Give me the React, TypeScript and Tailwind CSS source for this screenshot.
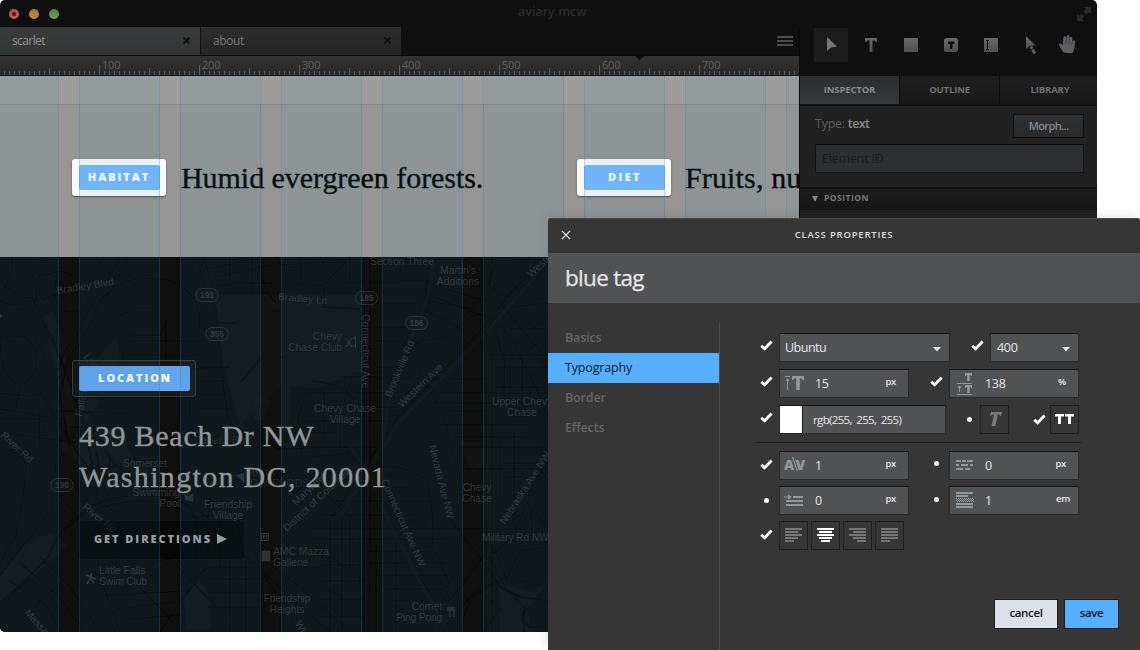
import type { ReactNode } from 'react';
import { FaHandPaper } from 'react-icons/fa';

const UI = "font-['Open_Sans',sans-serif]";

/* ---------- small icons ---------- */

function Check() {
  return (
    <svg width="13" height="11" viewBox="0 0 13 11" className="block">
      <path d="M1.3 5.8 4.6 8.8 11.6 1.6" fill="none" stroke="#fff" strokeWidth="2.8" />
    </svg>
  );
}

function Dot() {
  return <span className="mr-[4px] block size-[5px] rounded-full bg-white" />;
}

function Mark({ on, pad = 'pr-[6px]', className = '' }: { on: boolean; pad?: string; className?: string }) {
  return (
    <div className={`flex shrink-0 items-center justify-end ${pad} ${className}`}>
      {on ? <Check /> : <Dot />}
    </div>
  );
}

function Cross({ color, size = 8, width = 1.3 }: { color: string; size?: number; width?: number }) {
  return (
    <svg width={size} height={size} viewBox="0 0 8 8" className="-mt-px">
      <path d="M.7.7 7.3 7.3M7.3.7.7 7.3" stroke={color} strokeWidth={width} />
    </svg>
  );
}

/* ---------- tabs and ruler ---------- */

function FileTab({ name, active }: { name: string; active?: boolean }) {
  return (
    <div
      className={`flex h-[28px] w-[200px] items-center justify-between pr-[10px] text-[12px] ${
        active
          ? 'bg-gradient-to-b from-[#3a3c3c] to-[#323535] pl-[12px] tracking-[-0.600px] text-[#929496]'
          : 'bg-gradient-to-b from-[#2d2d2d] to-[#252525] pl-[12px] tracking-[-0.400px] text-[#777777]'
      }`}
    >
      <span className="-mt-px font-medium">{name}</span>
      <Cross color="#0d0d0d" size={7} width={2.2} />
    </div>
  );
}

function Ruler() {
  const ticks = Array.from({ length: 159 }, (_, i) => 4 + i * 5);
  return (
    <svg width="799" height="19" className="block shrink-0 bg-gradient-to-b from-[#333333] to-[#292929]">
      {ticks.map((x) => {
        const n = x + 1;
        const h = n % 100 === 0 ? 10 : n % 50 === 0 ? 7 : 4;
        return <rect key={x} x={x} y={19 - h} width="1" height={h} fill="#5b5b5b" />;
      })}
      {[100, 200, 300, 400, 500, 600, 700].map((n) => (
        <text key={n} x={n + 2} y="13" fontSize="11" letterSpacing="-.2" fill="#606060" className={UI}>
          {n}
        </text>
      ))}
      <path d="M635 0h9l-4.500 4.500z" fill="#0d0d0d" />
    </svg>
  );
}

/* ---------- canvas ---------- */

function Guides() {
  return (
    <div className="pointer-events-none absolute inset-0 flex overflow-hidden">
      <div className="w-[59px] shrink-0 border-r border-[rgba(50,115,180,0.24)] bg-[rgba(50,140,180,0.08)]" />
      {[0, 1, 2, 3, 4, 5, 6, 7].map((i) => (
        <div
          key={i}
          className="ml-[20px] w-[81px] shrink-0 border-x border-[rgba(50,115,180,0.24)] bg-[rgba(50,140,180,0.08)]"
        />
      ))}
    </div>
  );
}

function Tag({ children, className }: { children: ReactNode; className: string }) {
  return (
    <span
      className={`flex h-[25px] items-center justify-center rounded-[2px] pb-px font-['Open_Sans',sans-serif] font-extrabold text-white ${className}`}
    >
      {children}
    </span>
  );
}

function SelectedTag({ children, className }: { children: ReactNode; className: string }) {
  return (
    <div className="flex h-[37px] w-[94px] shrink-0 items-center justify-center rounded-[3px] bg-[#fbfaf9] shadow-[0_1px_2px_rgba(0,0,0,0.5)]">
      <Tag className={`w-[81px] bg-[#76b8ff] text-[11px] ${className}`}>{children}</Tag>
    </div>
  );
}

function Shield({ x, y, n }: { x: number; y: number; n: string }) {
  return (
    <g>
      <rect x={x - 11} y={y - 6.500} width="22" height="13" rx="6" fill="#0f1112" stroke="#2b2d2e" />
      <text x={x} y={y + 3} textAnchor="middle" fontSize="8.500" fontWeight="bold" fill="#333537">
        {n}
      </text>
    </g>
  );
}

function MapDrawing() {
  const roads = [
    'M0 24Q20 44 32 40L60 100 82 160 96 226',
    'M22 0Q38 20 36 44 60 38 86 24L104 0',
    'M12 0Q14 22 0 36M0 44Q20 52 34 42',
    'M60 14Q84 20 88 42 78 62 62 52 48 40 60 14',
    'M40 4 66 2M38 20 60 14M36 32 48 48',
    'M128 0Q110 40 96 54 80 90 68 100L60 140 70 190',
    'M120 0Q104 34 92 46 84 62 76 80 64 90 58 114',
    'M96 50Q120 12 170 24 200 34 200 70',
    'M110 66Q140 42 160 56M120 90Q116 72 134 78L160 78 166 66M128 84H204M130 98H204M166 60V112H130Q118 102 126 88',
    'M162 100H190V146M190 98V160M196 0Q204 28 216 52L222 120 228 160 244 194',
    'M204 0 214 36H266M214 30 238 26 272 26M216 20 272 8M210 12 252 2M230 0V24M252 0V36',
    'M200 110H222M200 124H224M200 138H228M200 152H230M180 120V162M190 112 230 110',
    'M0 82Q28 72 34 92 42 120 20 128 0 122 0 82M36 82 44 100M0 136Q26 140 38 138L60 120M38 138 40 190M20 128 16 150',
    'M0 162H40M0 176 68 184M0 152 62 162M44 140 80 200 110 240M60 154 128 156M70 170H130',
    'M0 190Q26 198 26 210 24 240 16 278 4 296 0 310',
    'M60 180Q54 210 52 250 40 270 20 292L0 318',
    'M96 194Q104 230 92 250 60 266 48 300 30 320 0 346',
    'M68 186 100 180Q112 220 150 222L190 212M100 224 146 218M80 212 160 206M110 196V230M130 200V234',
    'M56 234 96 282 140 330 182 375M96 240 132 270 180 312 226 360',
    'M70 270Q90 240 140 238 176 236 210 262L262 302 300 330 350 375',
    'M64 276Q82 248 140 244 174 244 206 268L256 308 290 340 330 375',
    'M20 306 60 340 84 375M10 324 48 350 60 375M40 300 72 332 100 375M70 300 100 320 120 375M0 350 30 322M18 366 60 326',
    'M150 266 184 310 178 334 210 310M184 246 196 260 240 256M196 262V300M208 254V310M220 250V310M236 254 244 300',
    'M182 302Q150 300 142 320 120 322 106 330M104 338 190 334M116 352 180 344M130 362 180 358',
    'M208 310H262M208 322H262M208 336H262M208 350H262M230 300V375M246 300V375M206 310 180 346 160 375',
    'M276 0Q290 24 306 30L324 28 350 0M282 8 340 4M324 28V50L360 52M320 0 330 22M300 0 302 28M350 24V0M400 0V26H340',
    'M276 46Q260 30 260 0M272 54H280M360 24H434M360 46H420',
    'M364 0V375M370 0V375M376 70H420M376 84H418M376 110H398M376 122H414M376 136H394M376 150H398',
    'M434 0Q432 30 424 50L408 90 390 130 384 180 368 216 350 230',
    'M430 0 425 45 403 90M434 0 428 52 406 94M458 6 474 0M426 44 476 52M424 52 462 72M420 60 446 82M440 30 492 46M434 40 492 62',
    'M412 90Q420 82 450 80 456 72 464 64 476 56 488 58',
    'M410 92 428 130 444 160 454 200 462 234',
    'M340 260Q358 230 400 164L486 76 548 0',
    'M332 260 398 160 480 74 540 0',
    'M492 0 490 30 506 40 548 2M488 28 496 4H512M500 14 530 0M494 30Q502 52 520 70L548 104',
    'M496 52 548 46M496 60Q520 94 540 140L548 160M510 72H548M504 66V170M490 98H548M492 64 506 110',
    'M548 58 516 88M548 78 530 92M548 132 530 150M510 104V160M522 100V160M496 110H548M496 130H548M540 102 548 114',
    'M486 98V375M492 98V375M438 136H548M424 122H486M434 146H530M444 154H486M440 168H530M454 180H530M460 190H548M462 212H548M465 226H486',
    'M306 136H408M306 150H400M300 164H396M290 176H340M300 190H376M312 124Q340 126 350 140L364 150M340 120H412M346 120Q340 134 360 144',
    'M306 136 298 160 302 200M324 136V180M340 150V190M276 192 350 190M310 200 350 196M350 200 366 210 400 210',
    'M366 210Q404 206 426 222 436 260 432 290 444 310 450 330L440 350 432 375',
    'M350 190 368 214 382 250 412 310 430 336 448 375',
    'M296 210 350 260 350 310M300 240 350 200M280 250 330 204M330 230H412M330 244H430M310 272H540M310 282H448M320 258H418',
    'M316 284 336 304 376 332 420 375M366 294H430M370 306H446M376 318H450M384 332H444M390 344H436M396 356H430',
    'M330 260V375M342 260V375M360 260V375M376 286V375M396 286V375M320 308H364M320 324H364M320 342H364M320 360H364',
    'M260 290 280 310H320M264 300 310 262M268 250 310 222M280 340V375M296 310V350M320 330 342 340M264 318 300 375',
    'M440 230 452 266 486 308 500 330 520 340 548 344',
    'M444 350 470 318 486 296 480 300M460 375 470 340 506 320 530 326M456 375Q462 328 500 326M490 300 506 332 524 350 524 375',
    'M548 290 520 294 505 324M494 290 508 326M530 240 512 280 494 296 486 280M500 188V240M500 220H530M500 206H548M514 170V240',
    'M480 334 500 352 484 375M530 350Q514 360 530 370H548M530 250 548 270M540 212 548 224M516 230Q530 242 532 262V280H548',
    'M280 100H284M262 100 240 126M218 66H236',
  ];
  return (
    <svg
      width="799"
      height="375"
      viewBox="0 0 799 375"
      className="absolute inset-0 font-['Liberation_Sans',Arial,sans-serif]"
    >
      <rect width="799" height="375" fill="#0f0f0f" />
      <g fill="#171717" fillOpacity=".5">
        <path d="M212 38h70v90l-42 40-12-40z" />
        <path d="M282 38h78v76l-40 16h-30v34l-8 6z" />
        <path d="M44 60l9-6 10 26 12 80-6 20zM80 120l36-40 4 24-26 50-14 20z" />
        <path d="M56 188l60-20 20 40-40 12z" />
        <path d="M254 146l6-10 12 8-8 18-10 2zM220 174l6-6 8 8-2 10-12 2z" />
        <path d="M0 320l20-30 30-14 18 12-24 22-44 40z" />
        <path d="M184 338l16-14 10 12v36h-24zM130 216l14-8 12 12-22 10z" />
        <path d="M460 185h24v22l-12 10zM500 375l-2-50 34 10 16-10-20 28 4 22z" />
      </g>
      <g fill="none" stroke="#131414" strokeWidth="3">
        {roads.map((d) => (
          <path key={d} d={d} />
        ))}
      </g>
      <g fill="none" stroke="#0a0a0b" strokeWidth="1.500">
        {roads.map((d) => (
          <path key={d} d={d} />
        ))}
      </g>
      <g fill="none" stroke="#111214" strokeWidth="3">
        <path d="M434 0Q432 30 424 50L408 90 390 130 384 180 368 216M340 260Q358 230 400 164L486 76 548 4M367 0V375M350 190 368 214 382 250 412 310 448 375" />
      </g>
      <g fill="#343536" fontSize="10.300" stroke="#0b0c0e" strokeWidth="1" paintOrder="stroke">
        <text transform="translate(57 37) rotate(-9)">Bradley Blvd</text>
        <text transform="translate(278 43) rotate(5)">Bradley Ln</text>
        <text x="370" y="8">Section Three</text>
        <text x="458" y="17" textAnchor="middle">Martin's</text>
        <text x="458" y="28" textAnchor="middle">Additions</text>
        <text transform="translate(531 21) rotate(-43)">Western Ave</text>
        <text x="342" y="83" textAnchor="end">Chevy</text>
        <text x="342" y="94" textAnchor="end">Chase Club</text>
        <text transform="translate(362 57) rotate(90)">Connecticut Ave</text>
        <text transform="translate(391 141) rotate(-67)">Brookville Rd</text>
        <text transform="translate(402 151) rotate(-44)">Western Ave</text>
        <text x="345" y="155" textAnchor="middle">Chevy Chase</text>
        <text x="345" y="166" textAnchor="middle">Village</text>
        <text x="522" y="148" textAnchor="middle">Upper Chevy</text>
        <text x="522" y="159" textAnchor="middle">Chase</text>
        <text transform="translate(83 100) rotate(52)">Little</text>
        <text transform="translate(82 160) rotate(-78)">Falls Pkwy</text>
        <text transform="translate(0 179) rotate(43)">River Rd</text>
        <text transform="translate(82 251) rotate(40)">River Rd</text>
        <text x="123" y="210">Somerset</text>
        <text x="180" y="239" textAnchor="end">Swimming</text>
        <text x="180" y="250" textAnchor="end">Pool</text>
        <text x="194" y="187" fill="#242526">Capella Bay</text>
        <text x="228" y="251" textAnchor="middle">Friendship</text>
        <text x="228" y="262" textAnchor="middle">Village</text>
        <text x="252" y="219" fill="#242526">Bank</text>
        <text x="250" y="230" fill="#242526">Gen FOODS</text>
        <text transform="translate(296 249) rotate(-43)">Maryland</text>
        <text transform="translate(287 275) rotate(-43)">District of Columbia</text>
        <text transform="translate(381 224) rotate(66)">Connecticut Ave NW</text>
        <text transform="translate(429 189) rotate(76)">Nevada Ave NW</text>
        <text x="477" y="234" textAnchor="middle">Chevy</text>
        <text x="477" y="245" textAnchor="middle">Chase</text>
        <text transform="translate(505 268) rotate(-57)">Nebraska Ave NW</text>
        <text x="482" y="284" letterSpacing="-.15">Military Rd NW</text>
        <text x="273" y="298">AMC Mazza</text>
        <text x="273" y="309">Gallerie</text>
        <text x="287" y="345" textAnchor="middle" letterSpacing="-.15">Friendship</text>
        <text x="287" y="356" textAnchor="middle">Heights</text>
        <text x="442" y="353" textAnchor="end">Comet</text>
        <text x="442" y="364" textAnchor="end" letterSpacing="-.2">Ping Pong</text>
        <text x="99" y="317">Little Falls</text>
        <text x="99" y="328" letterSpacing="-.15">Swim Club</text>
        <text transform="translate(24 356) rotate(48)">Massachusetts</text>
        <text transform="translate(295 366) rotate(62)">Wisconsin</text>
      </g>
      <Shield x={207} y={38} n="191" />
      <Shield x={217} y={77} n="355" />
      <Shield x={366.500} y={41} n="185" />
      <Shield x={416.500} y={66} n="186" />
      <Shield x={62} y={228} n="190" />
      <g fill="none" stroke="#303336">
        <path d="M346 81l6 9M352 81l-6 9M345 89h3M351 89h3M355.500 79v12M353 81h2" />
        <rect x="261.500" y="276.500" width="7" height="7" />
        <path d="M263.500 282v-4l2 2 1.500-2v4" />
        <path d="M86 318l10 4M92 316l-2 6-3 5M90 320l4 6" strokeWidth="1.500" />
        <path d="M448 350v4M450 350v4M452 350v4M450 353v7M454 350v10" strokeWidth="1.300" />
        <rect x="262" y="294" width="8" height="10" fill="#303336" strokeDasharray="1 1" />
      </g>
      <path d="M184 237l5 2 4-3v9l-8-2zM236 218l8-2v11l-3-4z" fill="#2a2d30" />
      <circle cx="0" cy="59" r="2" fill="#303336" />
    </svg>
  );
}

function Canvas() {
  const serif =
    "shrink-0 font-['Liberation_Serif',serif] text-[30px] whitespace-nowrap [-webkit-text-stroke-width:0.350px]";
  return (
    <div className="relative flex h-[556px] w-[799px] flex-col overflow-hidden">
      <div className="flex h-[181px] flex-col bg-[#979695]">
        <div className="h-[29px] border-b border-[#8a8989] bg-[#9e9d9c]" />
        <div className="flex pl-[72px] pt-[54px]">
          <SelectedTag className="tracking-[1.950px]">HABITAT</SelectedTag>
          <p className={`ml-[15px] w-[396px] leading-[38px] tracking-[-0.050px] text-[#040708] ${serif}`}>
            Humid evergreen forests.
          </p>
          <SelectedTag className="pl-[2px] tracking-[2.400px]">DIET</SelectedTag>
          <p className={`ml-[14px] leading-[38px] tracking-[0.150px] text-[#040708] ${serif}`}>Fruits, nuts.</p>
        </div>
      </div>
      <div className="relative h-[375px]">
        <MapDrawing />
        <div className="relative flex flex-col items-start pl-[72px] pt-[103px]">
          <div className="flex h-[37px] w-[124px] items-center rounded-[3px] border border-[#3a3c3e] bg-[rgba(30,30,30,0.5)] pl-[6px] shadow-[0_1px_2px_#000]">
            <Tag className="w-[111px] bg-[#62a5ec] pl-px text-[11px] tracking-[1.900px]">LOCATION</Tag>
          </div>
          <div className={`ml-[7px] mt-[18px] leading-[41px] text-[#979797] ${serif}`}>
            <p className="tracking-[0.750px]">439 Beach Dr NW</p>
            <p className="tracking-[1.320px]">Washington DC, 20001</p>
          </div>
          <div className="ml-[7px] mt-[24px] flex h-[38px] w-[165px] items-center rounded-[3px] bg-[rgba(0,0,0,0.6)] pb-[2px] pl-[15px] font-['Open_Sans',sans-serif] text-[11px] font-extrabold tracking-[1.950px] text-[#a0a0a0]">
            <span className="w-[123px] whitespace-nowrap">GET DIRECTIONS</span>
            <svg width="10" height="10" className="shrink-0">
              <path d="M0 0l10 5-10 5z" fill="#a0a0a0" />
            </svg>
          </div>
        </div>
      </div>
      <Guides />
    </div>
  );
}

/* ---------- right panel ---------- */

function Toolbar() {
  return (
    <div className="flex h-[49px] items-start pl-[14px] pt-[1px]">
      <div className="flex h-[34px] w-[34px] items-center justify-center bg-[#1c1c1c]">
        <svg width="14" height="16" className="mr-[-1px] mt-[-2px]">
          <path d="M2 1v14l4-3.500 6-1z" fill="#77777a" />
        </svg>
      </div>
      <svg width="220" height="34">
        <defs>
          <linearGradient id="g" x1="0" y1="0" x2="0" y2="1">
            <stop offset="0" stopColor="#69696b" />
            <stop offset="1" stopColor="#505054" />
          </linearGradient>
        </defs>
        <path d="M17 10h12v4h-1.500l-.5-1.500h-2.500V24h-3V12.500H19l-.5 1.500H17z" fill="url(#g)" />
        <rect x="56" y="10" width="14" height="14" fill="url(#g)" />
        <rect x="96" y="10" width="14" height="14" rx="2.500" fill="url(#g)" />
        <path d="M100 13.500h6.500V16h-2v5h-2.500v-5h-2z" fill="#0d0d0d" />
        <rect x="136" y="10" width="14" height="14" fill="url(#g)" />
        <path d="M138 12.500h3M139.500 12v10M138 21.500h3" stroke="#0d0d0d" strokeWidth="1" />
        <path d="M178 8v13l3.500-3 6-.500z" fill="url(#g)" />
        <path d="M183 18.500l1.200 2.200M184.600 21.500l2 4" stroke="#5c5c60" strokeWidth="3" />
      </svg>
      <FaHandPaper className="-ml-[10px] mt-[7px] size-[18px] rotate-6 text-[#5e5e61]" />
    </div>
  );
}

function PanelTab({ children, active, className }: { children: string; active?: boolean; className: string }) {
  return (
    <div
      className={`flex h-[28px] items-center justify-center text-[9.500px] font-bold tracking-[-0.150px] ${
        active
          ? 'bg-gradient-to-b from-[#2b2d2e] to-[#353738] text-[#8a8a8c]'
          : 'border-l border-[#0d0d0d] bg-gradient-to-b from-[#1f1f1f] to-[#181818] text-[#727272]'
      } ${className}`}
    >
      {children}
    </div>
  );
}

function SidePanel() {
  return (
    <div className="flex h-[605px] flex-1 flex-col border-l border-[#080808]">
      <Toolbar />
      <div className="flex border-b-2 border-[#101010]">
        <PanelTab active className="w-[99px]">INSPECTOR</PanelTab>
        <PanelTab className="w-[100px]">OUTLINE</PanelTab>
        <PanelTab className="w-[98px] pl-[3px]">LIBRARY</PanelTab>
      </div>
      <div className="h-[81px] bg-[#212121] pl-[15px] pr-[13px] pt-[8px]">
        <div className="flex items-center justify-between">
          <p className="mt-[-4px] text-[12.500px] tracking-[-0.250px] text-[#5e5e5e]">
            Type: <span className="font-semibold tracking-[-0.600px] text-[#8b8b8d]">text</span>
          </p>
          <div className="flex h-[24px] w-[71px] items-center justify-center border border-[#0c0c0c] bg-gradient-to-b from-[#2f3132] to-[#28292a] text-[11px] font-semibold tracking-[-0.600px] text-[#87898b]">
            Morph...
          </div>
        </div>
        <div className="mt-[6px] flex h-[29px] items-center rounded-[1px] border border-[#151515] border-t-[#0a0a0a] bg-[#2e2f30] pl-[6px] text-[12.500px] tracking-[-0.200px] text-[#1a1b1c]">
          <span className="mt-px">Element ID</span>
        </div>
      </div>
      <div className="flex h-[23px] items-center border-b border-t-2 border-[#0e0e0e] bg-gradient-to-b from-[#1c1c1c] to-[#161616] pl-[12px]">
        <svg width="6" height="6">
          <path d="M0 0h6L3 6z" fill="#888" />
        </svg>
        <span className="ml-[6px] mt-[-2px] text-[8.500px] font-bold tracking-[0.500px] text-[#777777]">POSITION</span>
      </div>
      <div className="flex-1 bg-[#212121]" />
    </div>
  );
}

/* ---------- modal ---------- */

const fieldBase =
  'flex h-[29px] shrink-0 items-center rounded-[1px] border border-[#2a2a2b] border-t-[#151516] bg-[#515254] text-[#e6e8ea]';

function Select({ value, className }: { value: string; className: string }) {
  return (
    <div
      className={`${fieldBase} justify-between pr-[8px] text-[12.500px] font-medium ${className}`}
    >
      <span className="mt-px">{value}</span>
      <svg width="8" height="5" className="mt-[3px]">
        <path d="M0 0h8L4 4.500z" fill="#e6e8ea" />
      </svg>
    </div>
  );
}

function NumberField({ icon, value, unit }: { icon: ReactNode; value: string; unit: string }) {
  return (
    <div className={`${fieldBase} w-[130px] text-[12.500px] font-medium tracking-[-0.300px]`}>
      <span className="w-[35px] pl-[4px]">{icon}</span>
      <span className="mt-px flex-1">{value}</span>
      <span className={`mt-[-3px] text-[9.500px] font-semibold ${unit === 'em' ? 'pr-[8px]' : 'pr-[12px]'}`}>{unit}</span>
    </div>
  );
}

function IconButton({ children, className = '' }: { children: ReactNode; className?: string }) {
  return (
    <div
      className={`flex size-[29px] shrink-0 items-center justify-center border border-[#1e1e1e] bg-[#363636] ${className}`}
    >
      {children}
    </div>
  );
}

const GREY = '#93989b';

const SizeIcon = (
  <svg width="22" height="18" fill={GREY}>
    <path d="M1 1h5v1H1zM3 5h1v10H3zM3.500 3l2 3h-4zM8 1h12v4h-1.500l-.5-1.500h-2.200V15h-3.600V3.500H10L9.500 5H8z" />
  </svg>
);

const LeadingIcon = (
  <svg width="20" height="23" fill={GREY} className="-mt-px ml-[2px]">
    <path d="M9 1h7v3h-1l-.3-1h-1v6h-2.500V3h-.9L10 4H9zM1 11h15v1H1zM9 13h7v3h-1l-.3-1h-1v6h-2.500v-6h-.9L10 16H9zM3 15h1v5H3zM3.500 13l2 3h-4zM1 22h15v1H1z" />
  </svg>
);

const KernIcon = (
  <svg width="24" height="16" className="-mt-px font-['Open_Sans',sans-serif]">
    <text x="0" y="13" fontSize="14" fontWeight="800" fill={GREY}>A</text>
    <text x="11.500" y="13" fontSize="14" fontWeight="800" fill={GREY}>V</text>
    <path d="M8.500 0 13.500 14" stroke={GREY} strokeWidth="1.200" />
  </svg>
);

const WordIcon = (
  <svg width="18" height="12" fill={GREY} className="-mt-px ml-[2px]">
    <path d="M0 1h5v2H0zM6 1h4v2H6zM11 1h6v2h-6zM0 5h3v2H0zM5 5h7v2H5zM14 5h3v2h-3zM0 9h7v2H0zM9 9h5v2H9z" />
  </svg>
);

const IndentIcon = (
  <svg width="20" height="14" fill={GREY}>
    <path d="M0 2.500h5v1H0zM4 .500l4 2.500-4 2.500zM9 2h10v2H9zM2 6h17v2H2zM2 10h17v2H2z" />
  </svg>
);

const ParagraphIcon = (
  <svg width="18" height="17" fill={GREY} className="ml-[2px]">
    <path d="M0 0h17v2H0zM0 3h12v2H0zM0 11h17v2H0zM0 14h17v2H0z" />
    <path d="M0 6.500h17M1 7.500h17M0 8.500h17M1 9.500h17" stroke={GREY} strokeDasharray="1 1" />
  </svg>
);

function AlignIcon({ mode, active }: { mode: 'left' | 'center' | 'right' | 'justify'; active?: boolean }) {
  const widths = mode === 'justify' ? [17, 17, 17, 17, 9] : [17, 13, 17, 13, 9];
  return (
    <svg width="17" height="14" fill={active ? '#fff' : '#777778'} className="-mt-[2px]">
      {widths.map((w, i) => (
        <rect
          key={i}
          x={mode === 'right' ? 17 - w : mode === 'center' ? (17 - w) / 2 : 0}
          y={i * 3}
          width={w}
          height="2"
        />
      ))}
    </svg>
  );
}

function NavItem({ children, active }: { children: string; active?: boolean }) {
  return (
    <div
      className={`flex h-[30px] items-center pl-[17px] text-[12.500px] tracking-[-0.150px] ${
        active ? 'bg-[#57b0ff] font-medium text-[#10181f]' : 'font-semibold text-[#656567]'
      }`}
    >
      <span className="mt-px">{children}</span>
    </div>
  );
}

function Modal() {
  return (
    <div className="absolute left-[548px] top-[218px] flex h-[432px] w-[592px] flex-col overflow-hidden rounded-t-[3px] bg-[#363636] shadow-[0_0_14px_rgba(0,0,0,0.12)]">
      <div className="flex h-[35px] shrink-0 items-center border-t border-[#4a4a4a] pl-[13px]">
        <span className="-mt-px flex">
          <Cross color="#e4e4e4" size={10} width={1.100} />
        </span>
        <h2 className="-mt-[2px] ml-[23px] flex-1 pr-[46px] text-center text-[9.500px] font-semibold tracking-[0.800px] text-[#dddddd]">
          CLASS PROPERTIES
        </h2>
      </div>
      <div className="flex h-[50px] shrink-0 items-center bg-[#515254] pl-[17px] text-[22.500px] tracking-[-0.700px] text-[#e6e8ea] [-webkit-text-stroke-width:0.250px]">
        blue tag
      </div>
      <div className="flex flex-1 pt-[20px]">
        <nav className="w-[172px] border-r border-[#4a4a4c]">
          <NavItem>Basics</NavItem>
          <NavItem active>Typography</NavItem>
          <NavItem>Border</NavItem>
          <NavItem>Effects</NavItem>
        </nav>
        <div className="flex flex-1 flex-col pl-[36px] pt-[10px]">
          <div className="flex">
            <Mark on className="mb-[4px] w-[23px]" />
            <Select value="Ubuntu" className="w-[171px] pl-[5px] tracking-[-0.500px]" />
            <Mark on className="mb-[4px] w-[40px]" />
            <Select value="400" className="w-[89px] pl-[6px] tracking-[-0.300px]" />
          </div>
          <div className="mt-[7px] flex">
            <Mark on className="mb-[4px] w-[23px]" />
            <NumberField icon={SizeIcon} value="15" unit="px" />
            <Mark on className="mb-[4px] w-[40px]" />
            <NumberField icon={LeadingIcon} value="138" unit="%" />
          </div>
          <div className="mt-[7px] flex">
            <Mark on className="mb-[4px] w-[23px]" />
            <div className={`${fieldBase} w-[167px] text-[11.500px] font-medium tracking-[-0.650px]`}>
              <span className="mr-[10px] h-full w-[23px] border-r border-[#151516] bg-white" />
              <span className="mt-px [word-spacing:2px]">rgb(255, 255, 255)</span>
            </div>
            <Mark on={false} pad="pr-[4px]" className="w-[34px]" />
            <IconButton>
              <svg width="14" height="15" fill="#7b7b7d">
                <path d="M3 0h11l-1 4h-1.200l0-1.500h-2L7.500 14h-4L6 2.500H4L3 4H2z" />
              </svg>
            </IconButton>
            <Mark on pad="pr-[4px]" className="w-[41px]" />
            <IconButton>
              <svg width="19" height="11" fill="#fff">
                <path d="M0 0h9v2.500H6V10H3V2.500H0zM10 0h9v2.500h-3V10h-3V2.500h-3z" />
              </svg>
            </IconButton>
          </div>
          <div className="mt-[8px] h-px w-[325px] bg-[#1f1f20]" />
          <div className="mt-[8px] flex">
            <Mark on className="mb-[3px] w-[23px]" />
            <NumberField icon={KernIcon} value="1" unit="px" />
            <Mark on={false} className="mb-[4px] w-[40px]" />
            <NumberField icon={WordIcon} value="0" unit="px" />
          </div>
          <div className="mt-[6px] flex">
            <Mark on={false} className="w-[23px]" />
            <NumberField icon={IndentIcon} value="0" unit="px" />
            <Mark on={false} className="mb-[3px] w-[40px]" />
            <NumberField icon={ParagraphIcon} value="1" unit="em" />
          </div>
          <div className="mt-[6px] flex">
            <Mark on className="mb-[2px] w-[23px]" />
            <div className="flex gap-[3px]">
              <IconButton>
                <AlignIcon mode="left" />
              </IconButton>
              <IconButton>
                <AlignIcon mode="center" active />
              </IconButton>
              <IconButton>
                <AlignIcon mode="right" />
              </IconButton>
              <IconButton>
                <AlignIcon mode="justify" />
              </IconButton>
            </div>
          </div>
          <div className="mt-[49px] flex justify-end gap-[6px] pr-[21px] text-[11.500px] font-semibold tracking-[-0.350px] text-[#16181a]">
            <div className="flex h-[30px] w-[64px] items-center justify-center border border-[#1c1c1c] bg-[#dde0e6] pb-[2px]">
              cancel
            </div>
            <div className="flex h-[30px] w-[55px] items-center justify-center border border-[#1c1c1c] bg-[#57b0ff] pb-[2px]">
              save
            </div>
          </div>
        </div>
      </div>
    </div>
  );
}

/* ---------- window ---------- */

export default function App() {
  return (
    <div className={`relative h-[650px] w-[1140px] overflow-hidden bg-white ${UI}`}>
      <div className="h-[632px] w-[1097px] overflow-hidden rounded-[5px] bg-[#0f0f0f]">
        <div className="flex h-[27px] items-center pl-[9px] pr-[6px]">
          <div className="flex w-[509px] gap-[10px]">
            <span className="flex size-[10px] items-center justify-center rounded-full bg-gradient-to-b from-[#b5494b] to-[#b96567]">
              <span className="size-[4px] rounded-full bg-[#4a0d0d]" />
            </span>
            <span className="size-[10px] rounded-full bg-gradient-to-b from-[#a5702c] to-[#b59355]" />
            <span className="size-[10px] rounded-full bg-gradient-to-b from-[#4f7f38] to-[#7f9c68]" />
          </div>
          <span className="mt-[-3px] flex-1 text-[12.500px] font-semibold text-[#2b2b2b]">aviary.mcw</span>
          <svg width="14" height="14" fill="#2b2b2b">
            <path d="M7 0h7v7l-2-2-2.500 2.500L6.500 4.500 9 2zM0 7l2 2 2.500-2.500L7.500 9.500 5 12l2 2H0z" />
          </svg>
        </div>
        <div className="flex">
          <div className="flex w-[799px] shrink-0 flex-col">
            <div className="flex h-[29px] border-b border-[#0a0a0a]">
              <FileTab name="scarlet" active />
              <div className="w-px" />
              <FileTab name="about" />
              <svg width="16" height="10" className="ml-[376px] mt-[9px]" fill="#4b4d4d">
                <path d="M0 0h16v2H0zM0 4h16v2H0zM0 8h16v2H0z" />
              </svg>
            </div>
            <Ruler />
            <div className="h-px bg-[#141214]" />
            <Canvas />
          </div>
          <SidePanel />
        </div>
      </div>
      <Modal />
    </div>
  );
}
